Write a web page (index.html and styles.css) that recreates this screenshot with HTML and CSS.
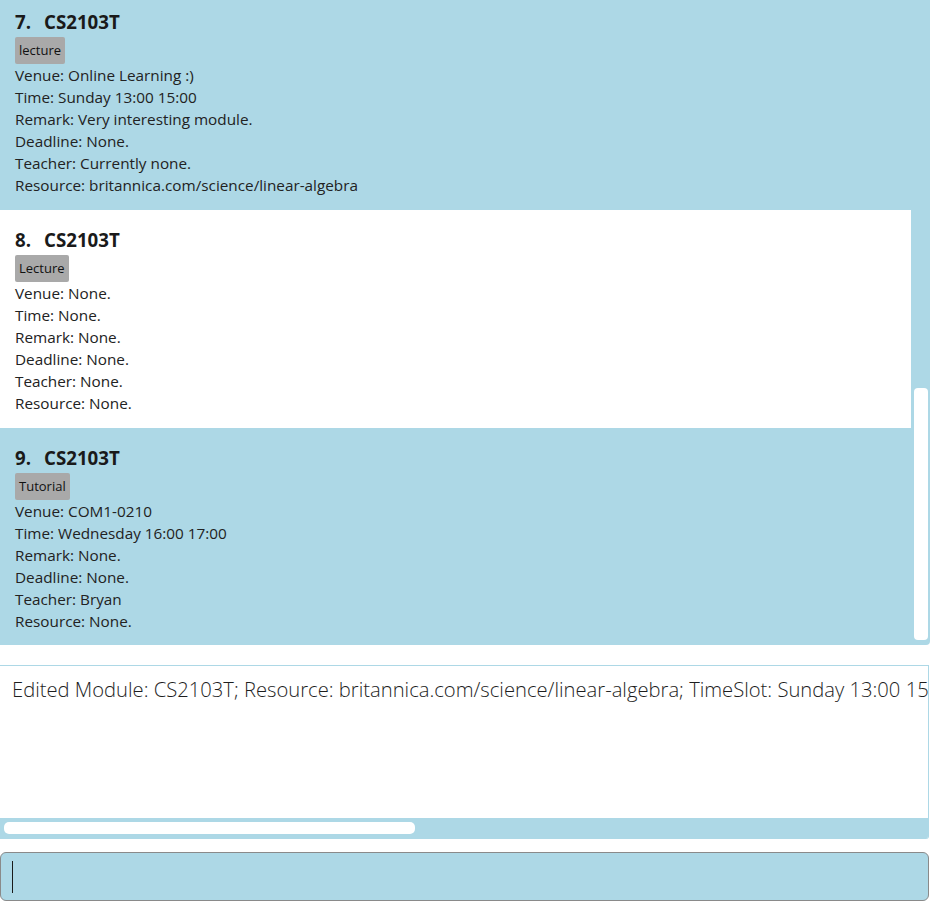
FILE: index.html
```html
<!DOCTYPE html>
<html lang="en">
<head>
<meta charset="utf-8">
<title>Modules</title>
<link rel="stylesheet" href="styles.css">
</head>
<body>
<div class="app">
  <div class="list-panel">
    <div class="list">
      <div class="list-inner">
        <div class="card">
          <div class="title"><span class="idx">7.</span><span class="code">CS2103T</span></div>
          <div class="tags"><span class="tag">lecture</span></div>
          <div class="line">Venue: Online Learning :)</div>
          <div class="line">Time: Sunday 13:00 15:00</div>
          <div class="line">Remark: Very interesting module.</div>
          <div class="line">Deadline: None.</div>
          <div class="line">Teacher: Currently none.</div>
          <div class="line">Resource: britannica.com/science/linear-algebra</div>
        </div>
        <div class="card card-alt">
          <div class="title"><span class="idx">8.</span><span class="code">CS2103T</span></div>
          <div class="tags"><span class="tag">Lecture</span></div>
          <div class="line">Venue: None.</div>
          <div class="line">Time: None.</div>
          <div class="line">Remark: None.</div>
          <div class="line">Deadline: None.</div>
          <div class="line">Teacher: None.</div>
          <div class="line">Resource: None.</div>
        </div>
        <div class="card">
          <div class="title"><span class="idx">9.</span><span class="code">CS2103T</span></div>
          <div class="tags"><span class="tag">Tutorial</span></div>
          <div class="line">Venue: COM1-0210</div>
          <div class="line">Time: Wednesday 16:00 17:00</div>
          <div class="line">Remark: None.</div>
          <div class="line">Deadline: None.</div>
          <div class="line">Teacher: Bryan</div>
          <div class="line">Resource: None.</div>
        </div>
      </div>
    </div>
    <div class="vscroll"><div class="vthumb"></div></div>
  </div>

  <div class="result-box">
    <div class="result-text">Edited Module: CS2103T; Resource: britannica.com/science/linear-algebra; TimeSlot: Sunday 13:00 15:00</div>
    <div class="hscroll"><div class="hthumb"></div></div>
  </div>

  <div class="command-box"><span class="caret"></span></div>
</div>
</body>
</html>
```
FILE: styles.css
```css
html, body {
  margin: 0;
  padding: 0;
  background: #ffffff;
}

body {
  font-family: "Open Sans", "Noto Sans", sans-serif;
  color: #222222;
}

.app {
  width: 930px;
  display: flex;
  flex-direction: column;
}

.list-panel {
  height: 645px;
  background: #add8e6;
  border-bottom-right-radius: 4px;
  display: flex;
  overflow: hidden;
}

.list {
  width: 911px;
  overflow: hidden;
}

.list-inner {
  margin-top: -8px;
}

.card {
  height: 218px;
  box-sizing: border-box;
  padding: 17px 15px 14px;
  font-size: 15.3px;
}

.card-alt {
  background: #ffffff;
}

.title {
  height: 25px;
  line-height: 25px;
  font-size: 18.7px;
  font-weight: 700;
  color: #1a1a1a;
  display: flex;
  gap: 13px;
  margin-bottom: 3px;
}

.tags {
  display: flex;
  height: 27px;
}

.tag {
  background: #a9a9a9;
  color: #111111;
  font-size: 13px;
  line-height: 27px;
  padding: 0 4px;
  border-radius: 2px;
}

.line {
  line-height: 22px;
  height: 22px;
  white-space: nowrap;
}

.vscroll {
  width: 19px;
  display: flex;
  flex-direction: column;
  justify-content: flex-end;
  padding: 0 2px 5px 3px;
  box-sizing: border-box;
}

.vthumb {
  height: 252px;
  background: #ffffff;
  border-radius: 4px;
}

.result-box {
  margin-top: 20px;
  width: 929px;
  height: 174px;
  box-sizing: border-box;
  border-top: 1px solid #add8e6;
  border-right: 1px solid #add8e6;
  border-bottom-right-radius: 3px;
  display: flex;
  flex-direction: column;
  overflow: hidden;
}

.result-text {
  flex: 1;
  padding: 10px 0 0 12px;
  font-size: 20.2px;
  font-weight: 300;
  line-height: 27px;
  color: #1e1e1e;
  white-space: nowrap;
  overflow: hidden;
}

.hscroll {
  height: 21px;
  background: #add8e6;
  padding: 4px 0 0 4px;
  box-sizing: border-box;
}

.hthumb {
  width: 411px;
  height: 12px;
  background: #ffffff;
  border-radius: 5px;
}

.command-box {
  margin-top: 13px;
  width: 929px;
  height: 49px;
  box-sizing: border-box;
  background: #add8e6;
  border: 1px solid #8a8a8a;
  border-radius: 6px;
  padding: 8px 0 0 11px;
}

.caret {
  display: block;
  width: 1px;
  height: 32px;
  background: #1a1a1a;
}
```
